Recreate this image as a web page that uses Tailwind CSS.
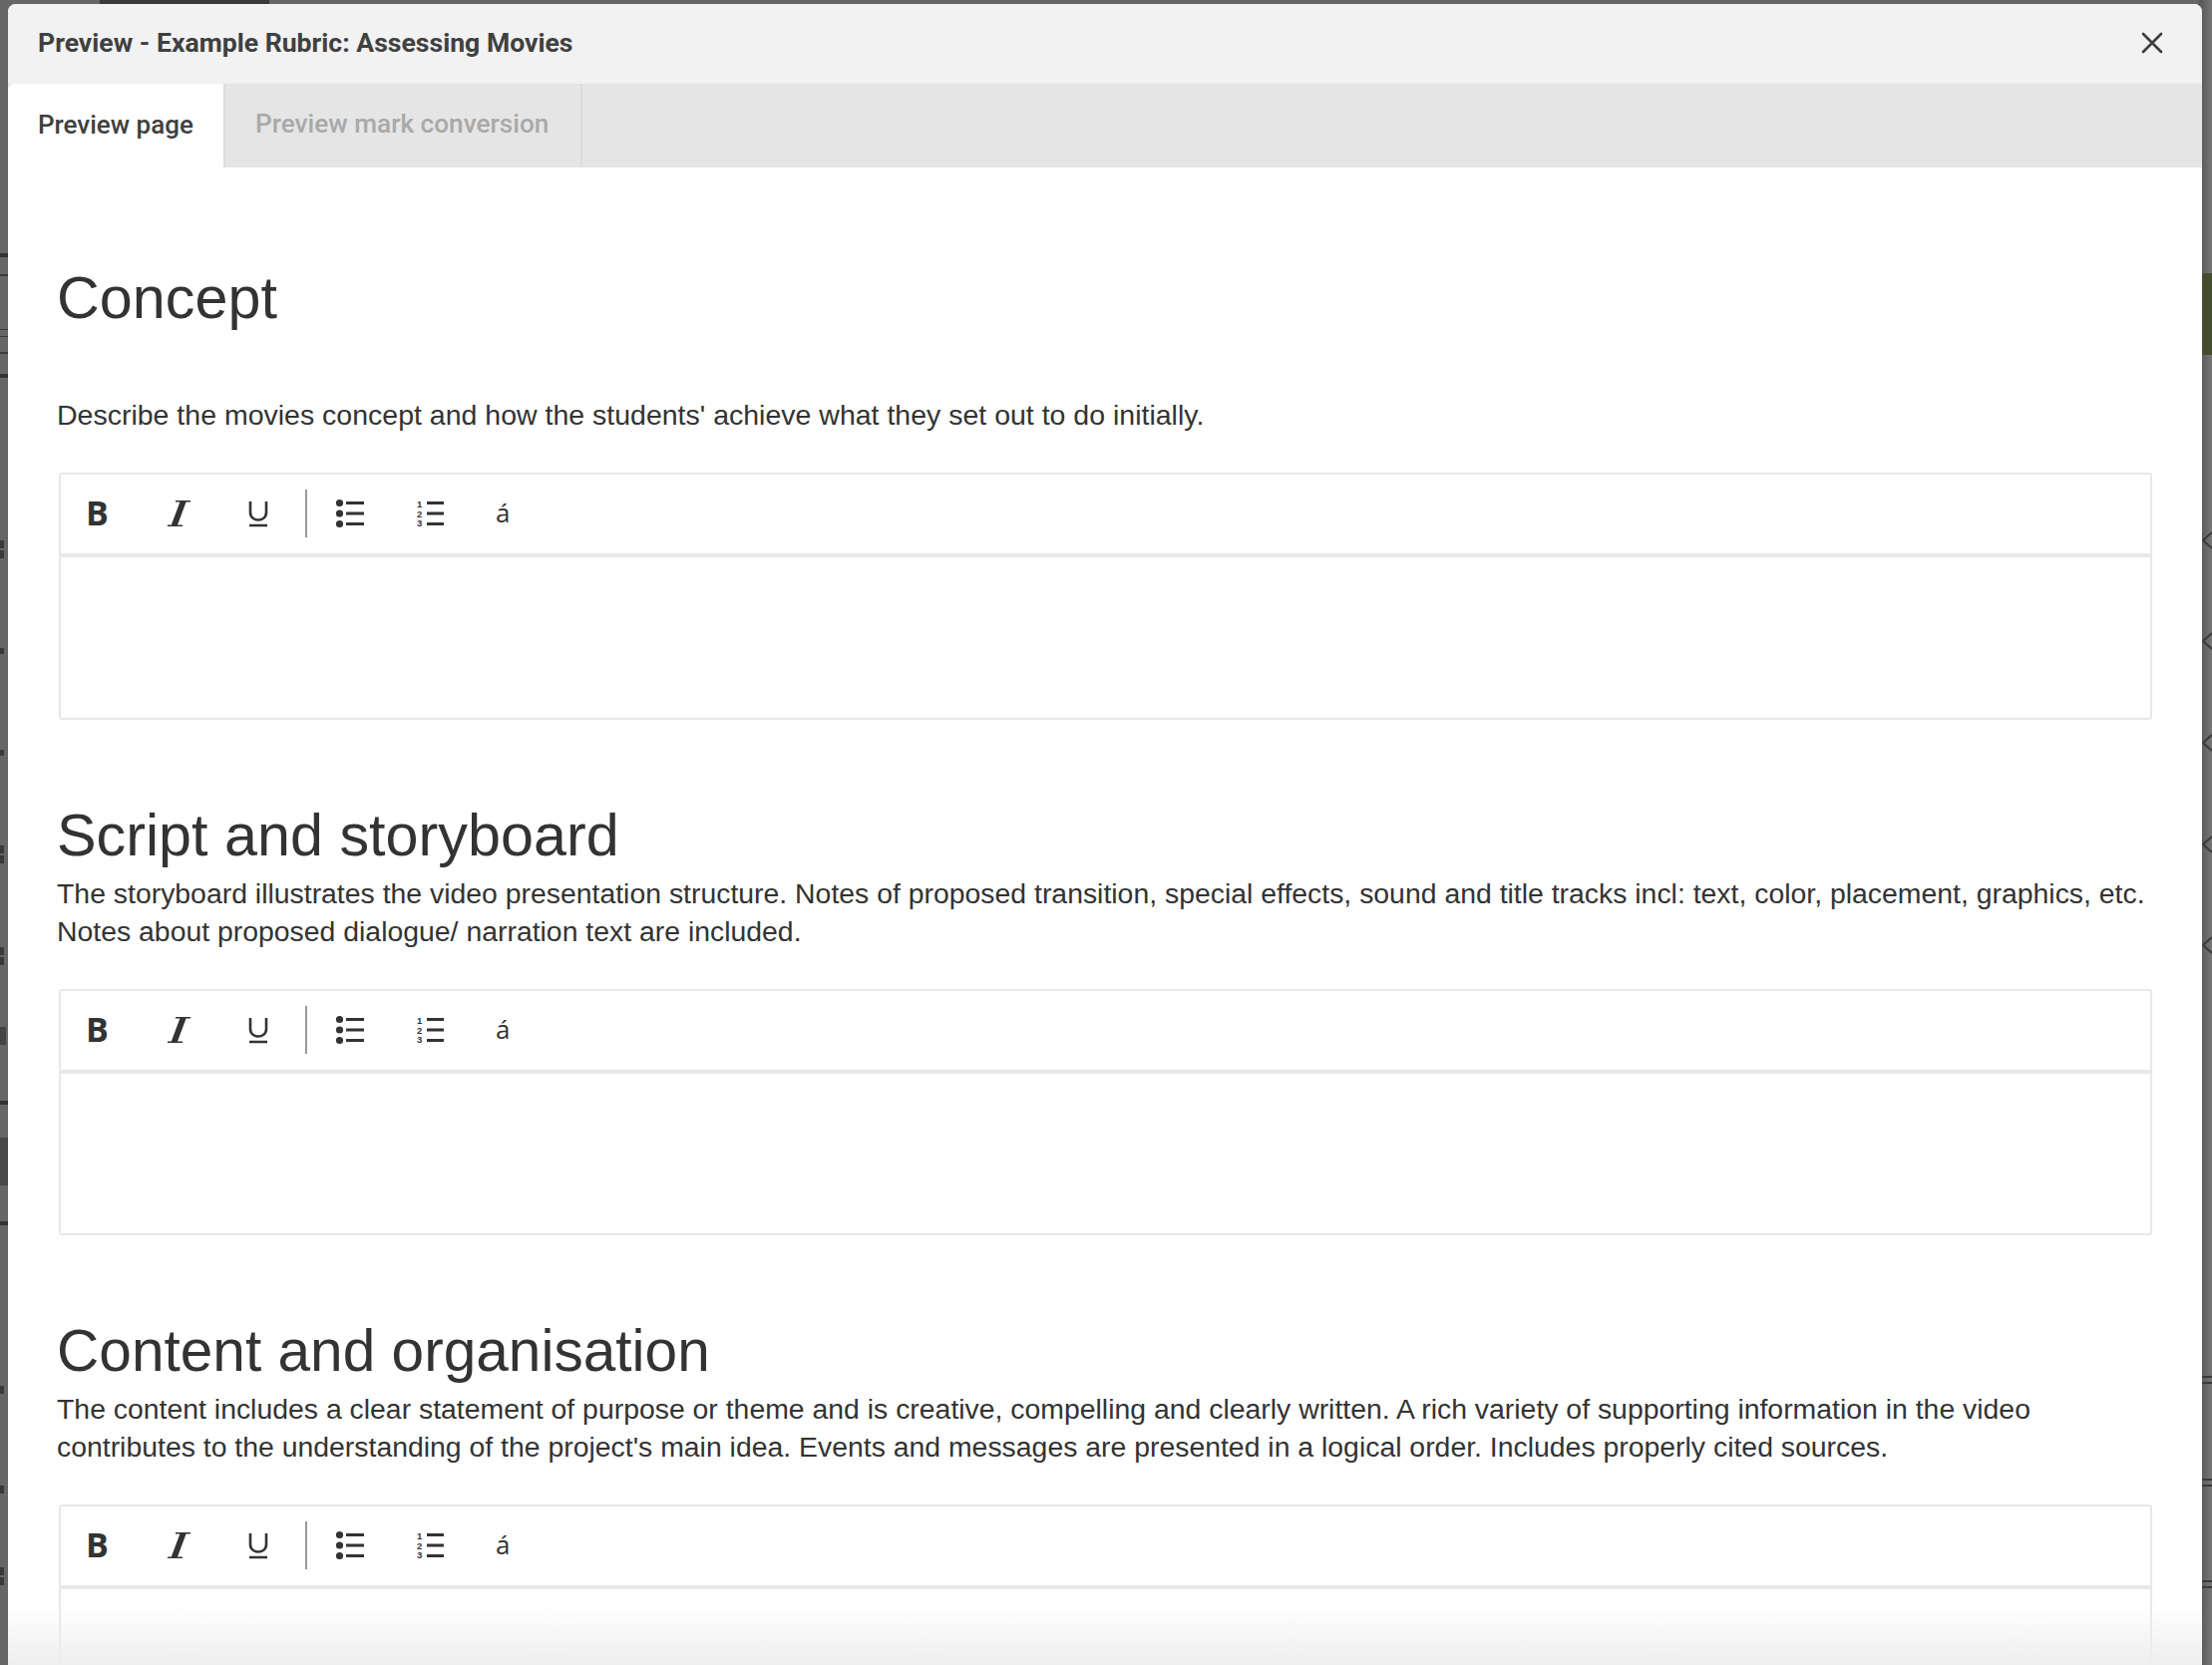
<!DOCTYPE html>
<html>
  <head>
    <title>Preview - Example Rubric: Assessing Movies</title>
    <meta name="viewport" content="width=device-width, initial-scale=1.0" />
    <script src="https://cdn.jsdelivr.net/npm/@tailwindcss/browser@4"></script>
  </head>

  <body class="relative w-[2218px] h-[1670px] overflow-hidden bg-[#666666] font-['Liberation_Sans',sans-serif] text-[#333333]">
    <!-- Dimmed page behind the modal -->
    <div class="absolute top-0 bottom-0 left-[2205px] w-[13px] bg-linear-to-r from-[#555555] to-[#777777]"></div>
    <div class="absolute top-0 left-[100px] h-[4px] w-[170px] bg-[#3a3a3a]"></div>
    <div class="absolute top-[254px] left-0 h-[4px] w-[8px] bg-[#333333]"></div>
    <div class="absolute top-[275px] left-0 h-[2px] w-[8px] bg-[#3a3a3a]"></div>
    <div class="absolute top-[330px] left-0 h-[1px] w-[8px] bg-[#3a3a3a]"></div>
    <div class="absolute top-[337px] left-0 h-[1px] w-[8px] bg-[#3a3a3a]"></div>
    <div class="absolute top-[353px] left-0 h-[2px] w-[8px] bg-[#3a3a3a]"></div>
    <div class="absolute top-[375px] left-0 h-[4px] w-[8px] bg-[#333333]"></div>
    <div class="absolute top-[542px] left-0 h-[8px] w-[4px] bg-[#3a3a3a]"></div>
    <div class="absolute top-[552px] left-0 h-[8px] w-[4px] bg-[#3a3a3a]"></div>
    <div class="absolute top-[650px] left-0 h-[6px] w-[4px] bg-[#3a3a3a]"></div>
    <div class="absolute top-[752px] left-0 h-[6px] w-[4px] bg-[#3a3a3a]"></div>
    <div class="absolute top-[848px] left-0 h-[8px] w-[4px] bg-[#3a3a3a]"></div>
    <div class="absolute top-[858px] left-0 h-[8px] w-[4px] bg-[#3a3a3a]"></div>
    <div class="absolute top-[950px] left-0 h-[8px] w-[4px] bg-[#3a3a3a]"></div>
    <div class="absolute top-[960px] left-0 h-[8px] w-[4px] bg-[#3a3a3a]"></div>
    <div class="absolute top-[1030px] left-0 h-[18px] w-[6px] bg-[#444444]"></div>
    <div class="absolute top-[1104px] left-0 h-[4px] w-[8px] bg-[#333333]"></div>
    <div class="absolute top-[1141px] left-0 h-[48px] w-[8px] bg-[#484848]"></div>
    <div class="absolute top-[1225px] left-0 h-[4px] w-[8px] bg-[#333333]"></div>
    <div class="absolute top-[1390px] left-0 h-[8px] w-[4px] bg-[#3a3a3a]"></div>
    <div class="absolute top-[1490px] left-0 h-[8px] w-[4px] bg-[#3a3a3a]"></div>
    <div class="absolute top-[1572px] left-0 h-[8px] w-[4px] bg-[#3a3a3a]"></div>
    <div class="absolute top-[1582px] left-0 h-[8px] w-[4px] bg-[#3a3a3a]"></div>

    <div class="absolute top-[274px] right-0 h-[82px] w-[10px] bg-[#454d2e]"></div>
    <div class="absolute top-[1380px] right-0 h-[8px] w-[10px] border-y-2 border-[#3a3a3a]"></div>
    <div class="absolute top-[1483px] right-0 h-[8px] w-[10px] border-y-2 border-[#3a3a3a]"></div>
    <div class="absolute top-[1585px] right-0 h-[8px] w-[10px] border-y-2 border-[#3a3a3a]"></div>
    <svg class="absolute top-[530px] right-0 w-[10px] h-[430px]" viewBox="0 0 10 430" fill="none" stroke="#3a3a3a" stroke-width="2">
      <path d="M10 4 1 12l9 8M10 105l-9 8 9 8M10 207l-9 8 9 8M10 309l-9 8 9 8M10 410l-9 8 9 8" />
    </svg>

    <!-- Modal -->
    <div class="absolute top-[4px] left-[8px] w-[2200px] h-[1680px] bg-white rounded-t-[8px] overflow-hidden">
      <div class="flex items-center justify-between h-[80px] pb-[2px] pl-[30px] pr-[38px] bg-[#f2f2f2]">
        <h5 class="font-['Roboto',sans-serif] font-bold text-[26.6px] text-[#404040]">Preview - Example Rubric: Assessing Movies</h5>
        <button type="button" aria-label="Close">
          <svg class="block w-[24px] h-[24px]" viewBox="0 0 24 24" fill="none" stroke="#3d3d3d" stroke-width="2.6" stroke-linecap="round">
            <path d="M3 3l18 18M21 3 3 21" />
          </svg>
        </button>
      </div>

      <!-- Tabs -->
      <div class="flex h-[84px] pb-[2px] bg-[#e5e5e5] font-['Roboto',sans-serif] text-[26.2px]">
        <a class="flex items-center w-[218px] pl-[30px] pb-[2px] bg-white rounded-tl-[6px] border-r-2 border-[#dcdcdc] font-medium text-[26px] text-[#404040] -mb-[2px]">Preview page</a>
        <a class="flex items-center w-[358px] pl-[30px] border-r-2 border-[#dcdcdc] font-medium text-[#a9a9a9]">Preview mark conversion</a>
      </div>

      <div class="pl-[49px] pr-[50px]">
        <!-- Concept -->
        <h3 class="pt-[99px] text-[59.3px] leading-[64px]">Concept</h3>
        <p class="mt-[66px] text-[28.5px] leading-[38px]">Describe the movies concept and how the students' achieve what they set out to do initially.</p>
        <div class="mt-[39px] ml-[2px] h-[248px] border-2 border-[#e8e8e8] rounded-[3px]">
          <div class="flex items-center h-[83px] pb-[2px] border-b-4 border-[#e8e8e8] text-[#333333]">
            <span class="w-[82px] pl-[25px] font-['Open_Sans',sans-serif] font-bold text-[34px]">B</span>
            <svg class="ml-[24px] mr-[1px] w-[78px] h-[26px]" viewBox="0 0 78 26" fill="#333333"><path d="M9 0h15v1.6h-4.4L11 24.4h5V26H1v-1.6h3.8L13.4 1.6H9z"/></svg>
            <svg class="w-[26px] h-[28px]" viewBox="0 0 26 28" fill="none" stroke="#333333" stroke-width="2.6"><path d="M5 2v11c0 10 16 10 16 0V2M4 26h18" /></svg>
            <span class="ml-[34px] w-[2px] h-[48px] bg-[#999999]"></span>
            <svg class="ml-[26px] w-[32px] h-[30px]" viewBox="0 0 32 30" fill="#333333"><circle cx="6.5" cy="4.5" r="3.6"/><circle cx="6.5" cy="15" r="3.6"/><circle cx="6.5" cy="25.5" r="3.6"/><path d="M13 3h18v3H13zM13 13.5h18v3H13zM13 24h18v3H13z"/></svg>
            <svg class="ml-[51px] w-[30px] h-[30px]" viewBox="0 0 30 30" fill="#333333"><text x="1" y="9" font-family="Liberation Sans" font-size="9.5" font-weight="700">1</text><text x="1" y="18.5" font-family="Liberation Sans" font-size="9.5" font-weight="700">2</text><text x="1" y="28" font-family="Liberation Sans" font-size="9.5" font-weight="700">3</text><path d="M11 3h17v3H11zM11 13.5h17v3H11zM11 24h17v3H11z"/></svg>
            <span class="ml-[50px] font-['Open_Sans',sans-serif] text-[26px]">á</span>
          </div>
        </div>

        <!-- Script and storyboard -->
        <h3 class="mt-[84px] text-[59.3px] leading-[64px]">Script and storyboard</h3>
        <p class="mt-[7px] text-[28.4px] leading-[38px]">The storyboard illustrates the video presentation structure. Notes of proposed transition, special effects, sound and title tracks incl: text, color, placement, graphics, etc. Notes about proposed dialogue/ narration text are included.</p>
        <div class="mt-[39px] ml-[2px] h-[247px] border-2 border-[#e8e8e8] rounded-[3px]">
          <div class="flex items-center h-[83px] pb-[2px] border-b-4 border-[#e8e8e8] text-[#333333]">
            <span class="w-[82px] pl-[25px] font-['Open_Sans',sans-serif] font-bold text-[34px]">B</span>
            <svg class="ml-[24px] mr-[1px] w-[78px] h-[26px]" viewBox="0 0 78 26" fill="#333333"><path d="M9 0h15v1.6h-4.4L11 24.4h5V26H1v-1.6h3.8L13.4 1.6H9z"/></svg>
            <svg class="w-[26px] h-[28px]" viewBox="0 0 26 28" fill="none" stroke="#333333" stroke-width="2.6"><path d="M5 2v11c0 10 16 10 16 0V2M4 26h18" /></svg>
            <span class="ml-[34px] w-[2px] h-[48px] bg-[#999999]"></span>
            <svg class="ml-[26px] w-[32px] h-[30px]" viewBox="0 0 32 30" fill="#333333"><circle cx="6.5" cy="4.5" r="3.6"/><circle cx="6.5" cy="15" r="3.6"/><circle cx="6.5" cy="25.5" r="3.6"/><path d="M13 3h18v3H13zM13 13.5h18v3H13zM13 24h18v3H13z"/></svg>
            <svg class="ml-[51px] w-[30px] h-[30px]" viewBox="0 0 30 30" fill="#333333"><text x="1" y="9" font-family="Liberation Sans" font-size="9.5" font-weight="700">1</text><text x="1" y="18.5" font-family="Liberation Sans" font-size="9.5" font-weight="700">2</text><text x="1" y="28" font-family="Liberation Sans" font-size="9.5" font-weight="700">3</text><path d="M11 3h17v3H11zM11 13.5h17v3H11zM11 24h17v3H11z"/></svg>
            <span class="ml-[50px] font-['Open_Sans',sans-serif] text-[26px]">á</span>
          </div>
        </div>

        <!-- Content and organisation -->
        <h3 class="mt-[84px] text-[58.6px] leading-[64px]">Content and organisation</h3>
        <p class="mt-[7px] text-[28.4px] leading-[38px]">The content includes a clear statement of purpose or theme and is creative, compelling and clearly written. A rich variety of supporting information in the video contributes to the understanding of the project's main idea. Events and messages are presented in a logical order. Includes properly cited sources.</p>
        <div class="mt-[39px] ml-[2px] h-[248px] border-2 border-[#e8e8e8] rounded-[3px]">
          <div class="flex items-center h-[83px] pb-[2px] border-b-4 border-[#e8e8e8] text-[#333333]">
            <span class="w-[82px] pl-[25px] font-['Open_Sans',sans-serif] font-bold text-[34px]">B</span>
            <svg class="ml-[24px] mr-[1px] w-[78px] h-[26px]" viewBox="0 0 78 26" fill="#333333"><path d="M9 0h15v1.6h-4.4L11 24.4h5V26H1v-1.6h3.8L13.4 1.6H9z"/></svg>
            <svg class="w-[26px] h-[28px]" viewBox="0 0 26 28" fill="none" stroke="#333333" stroke-width="2.6"><path d="M5 2v11c0 10 16 10 16 0V2M4 26h18" /></svg>
            <span class="ml-[34px] w-[2px] h-[48px] bg-[#999999]"></span>
            <svg class="ml-[26px] w-[32px] h-[30px]" viewBox="0 0 32 30" fill="#333333"><circle cx="6.5" cy="4.5" r="3.6"/><circle cx="6.5" cy="15" r="3.6"/><circle cx="6.5" cy="25.5" r="3.6"/><path d="M13 3h18v3H13zM13 13.5h18v3H13zM13 24h18v3H13z"/></svg>
            <svg class="ml-[51px] w-[30px] h-[30px]" viewBox="0 0 30 30" fill="#333333"><text x="1" y="9" font-family="Liberation Sans" font-size="9.5" font-weight="700">1</text><text x="1" y="18.5" font-family="Liberation Sans" font-size="9.5" font-weight="700">2</text><text x="1" y="28" font-family="Liberation Sans" font-size="9.5" font-weight="700">3</text><path d="M11 3h17v3H11zM11 13.5h17v3H11zM11 24h17v3H11z"/></svg>
            <span class="ml-[50px] font-['Open_Sans',sans-serif] text-[26px]">á</span>
          </div>
        </div>
      </div>

      <!-- Fade at the bottom of the scroll area -->
      <div class="absolute left-0 right-0 top-[1606px] h-[60px] bg-linear-to-b from-white/0 to-[#eeeeee]"></div>
    </div>
  </body>
</html>
